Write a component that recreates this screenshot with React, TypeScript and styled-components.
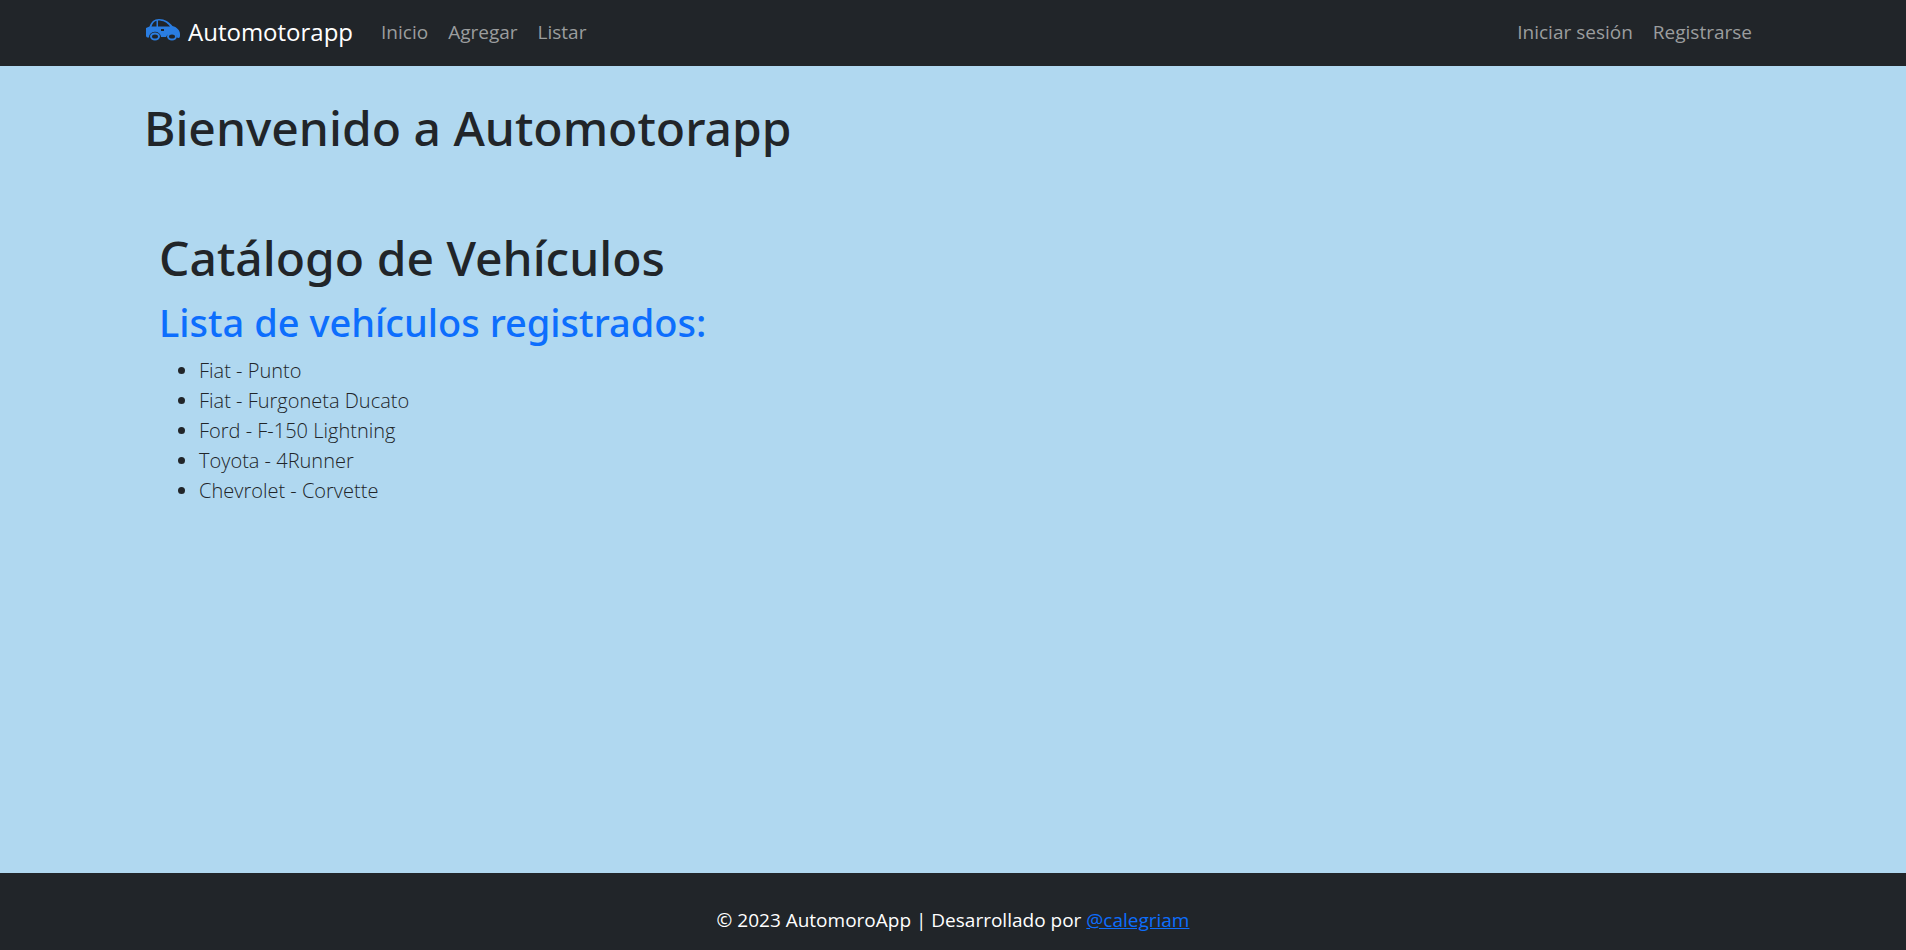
import React from "react";
import styled, { createGlobalStyle } from "styled-components";

const GlobalStyle = createGlobalStyle`
  *, *::before, *::after { box-sizing: border-box; }
  body {
    margin: 0;
    font-family: "Open Sans", "Noto Sans", sans-serif;
    font-size: 19px;
    line-height: 30px;
    color: #212529;
    background: #b0d8f0;
  }
`;

const Page = styled.div`
  min-height: 100vh;
  display: flex;
  flex-direction: column;
`;

const Container = styled.div`
  width: 100%;
  max-width: 1648px;
  margin: 0 auto;
  padding: 0 15px;
`;

const Navbar = styled.header`
  background: #212529;
  padding: 7px 0 9px;
`;

const NavRow = styled(Container)`
  display: flex;
  align-items: center;
  min-height: 50px;
`;

const Brand = styled.a`
  display: flex;
  align-items: center;
  gap: 7px;
  margin-right: 18px;
  font-size: 24px;
  color: #fff;
  text-decoration: none;
`;

const CarIcon = styled.svg`
  width: 37px;
  height: 24px;
  margin-bottom: 4px;
`;

const NavLinks = styled.nav<{ $end?: boolean }>`
  display: flex;
  margin-left: ${(p) => (p.$end ? "auto" : "0")};
`;

const NavLink = styled.a`
  padding: 0 10px;
  color: #9b9d9e;
  text-decoration: none;
`;

const Main = styled.main`
  flex: 1;
  padding-top: 32px;
`;

const Title = styled.h1`
  margin: 0 0 10px;
  font-family: "Noto Sans", "Open Sans", sans-serif;
  font-size: 48px;
  line-height: 60px;
  font-weight: 500;
`;

const Catalog = styled.section`
  padding: 60px 15px 20px;
`;

const Subtitle = styled.h2`
  margin: 0 0 10px;
  font-family: "Noto Sans", "Open Sans", sans-serif;
  font-size: 38px;
  line-height: 48px;
  font-weight: 500;
  color: #0d6efd;
`;

const List = styled.ul`
  margin: 0;
  padding-left: 40px;
  font-size: 20px;
  font-weight: 300;
`;

const Footer = styled.footer`
  padding: 32px 15px 15px;
  text-align: center;
  color: #fff;
  background: #212529;
`;

const FooterLink = styled.a`
  color: #0d6efd;
`;

const vehicles = [
  "Fiat - Punto",
  "Fiat - Furgoneta Ducato",
  "Ford - F-150 Lightning",
  "Toyota - 4Runner",
  "Chevrolet - Corvette",
];

function Car() {
  return (
    <CarIcon viewBox="0 0 37 24" aria-hidden="true">
      <path
        fill="#2a7de1"
        fillRule="evenodd"
        d="M2 10L5.500 8.500C7 4 10 1 15 1C21 1 25 4 28.500 8C32.500 9 36 12 36 16V18Q36 20 34.500 20L33.500 20A6 5.500 0 0 0 22 19H17A6 5.500 0 0 0 5 19.500H3.500Q2 19.500 2 17.500ZM7.500 8.500H12.500V2.800C10 3.500 8.500 5.500 7.500 8.500ZM14 2.500V8.500H26C23 4.500 19.500 2.500 14 2.500ZM17 11V13H20V11Z"
      />
      <ellipse cx="11" cy="18.500" rx="4" ry="3" fill="none" stroke="#2a7de1" strokeWidth="2" />
      <ellipse cx="28" cy="18.500" rx="4" ry="3" fill="none" stroke="#2a7de1" strokeWidth="2" />
    </CarIcon>
  );
}

export default function App() {
  return (
    <Page>
      <GlobalStyle />
      <Navbar>
        <NavRow>
          <Brand href="#">
            <Car />
            Automotorapp
          </Brand>
          <NavLinks aria-label="Principal">
            <NavLink href="#inicio">Inicio</NavLink>
            <NavLink href="#agregar">Agregar</NavLink>
            <NavLink href="#listar">Listar</NavLink>
          </NavLinks>
          <NavLinks $end aria-label="Cuenta">
            <NavLink href="#login">Iniciar sesión</NavLink>
            <NavLink href="#registro">Registrarse</NavLink>
          </NavLinks>
        </NavRow>
      </Navbar>
      <Main>
        <Container>
          <Title>Bienvenido a Automotorapp</Title>
          <Catalog>
            <Title>Catálogo de Vehículos</Title>
            <Subtitle>Lista de vehículos registrados:</Subtitle>
            <List>
              {vehicles.map((v) => (
                <li key={v}>{v}</li>
              ))}
            </List>
          </Catalog>
        </Container>
      </Main>
      <Footer>
        © 2023 AutomoroApp | Desarrollado por <FooterLink href="#calegriam">@calegriam</FooterLink>
      </Footer>
    </Page>
  );
}
